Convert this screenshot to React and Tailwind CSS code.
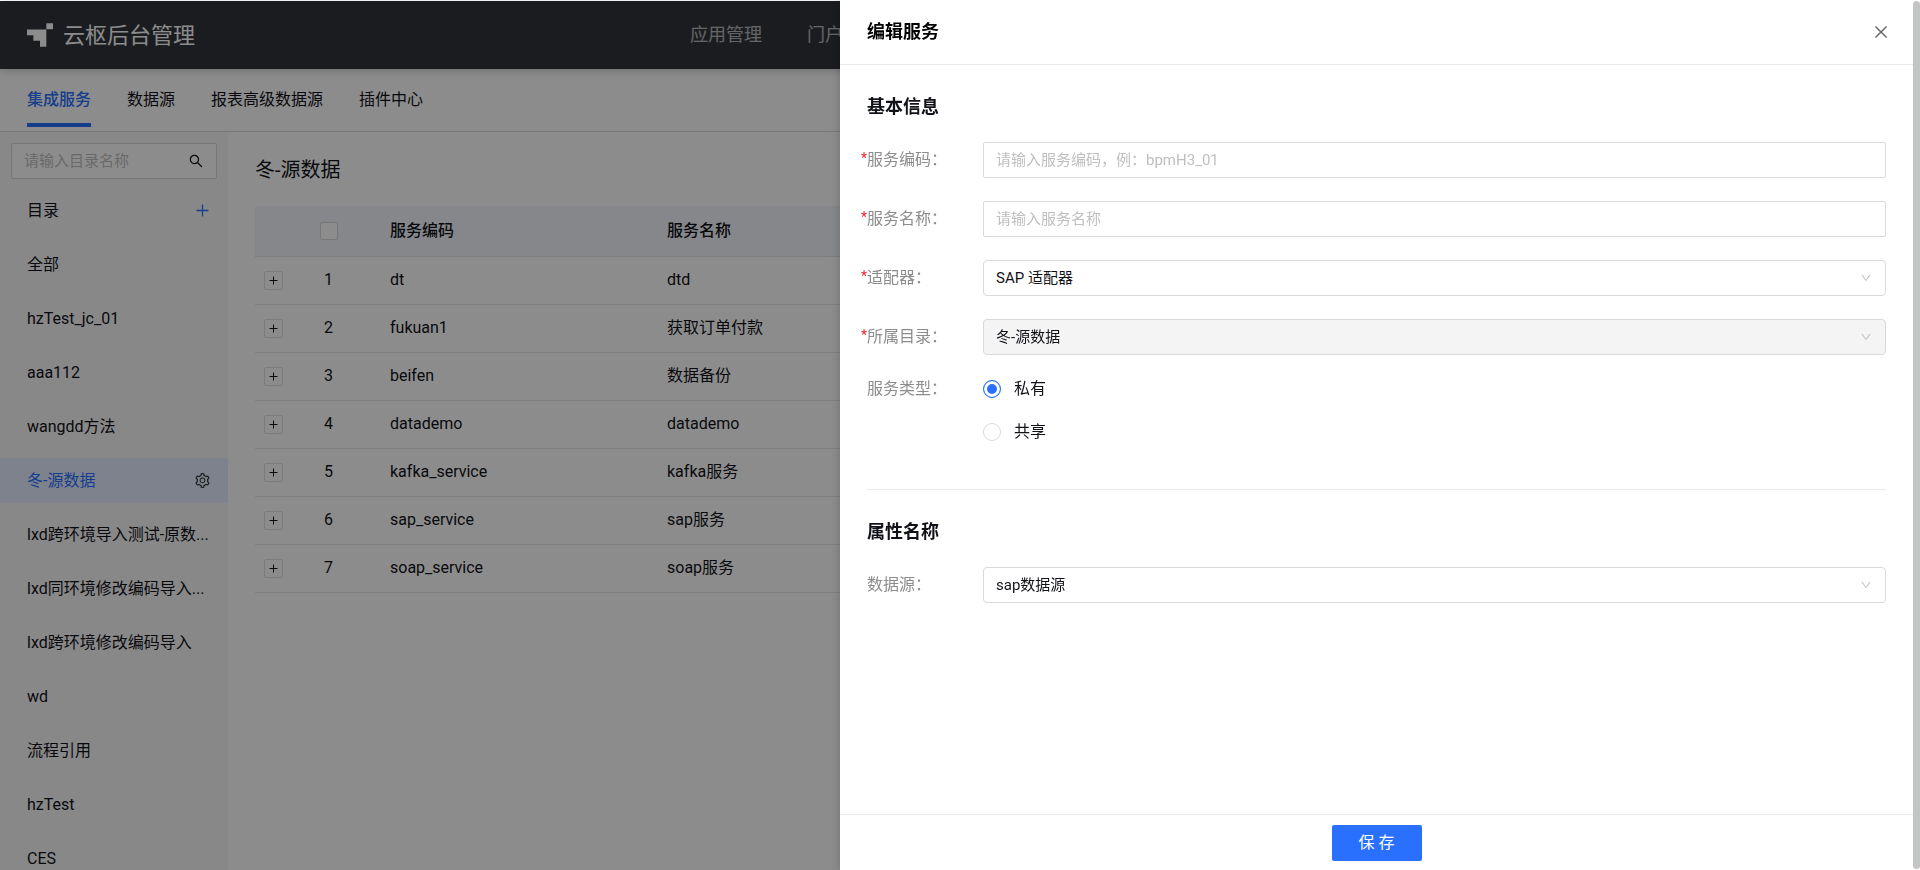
import React, { useState } from 'react';
import {
  AiOutlineClose,
  AiOutlineDown,
  AiOutlinePlus,
  AiOutlineSearch,
  AiOutlineSetting,
} from 'react-icons/ai';

const navItems = ['应用管理', '门户管理'];

const tabs = ['集成服务', '数据源', '报表高级数据源', '插件中心'];

const folders = [
  '全部',
  'hzTest_jc_01',
  'aaa112',
  'wangdd方法',
  '冬-源数据',
  'lxd跨环境导入测试-原数...',
  'lxd同环境修改编码导入...',
  'lxd跨环境修改编码导入',
  'wd',
  '流程引用',
  'hzTest',
  'CES',
];

const services = [
  { code: 'dt', name: 'dtd' },
  { code: 'fukuan1', name: '获取订单付款' },
  { code: 'beifen', name: '数据备份' },
  { code: 'datademo', name: 'datademo' },
  { code: 'kafka_service', name: 'kafka服务' },
  { code: 'sap_service', name: 'sap服务' },
  { code: 'soap_service', name: 'soap服务' },
];

const Logo = () => (
  <svg className="w-[26px] h-6" viewBox="0 0 78 71" fill="currentColor" aria-hidden="true">
    <path d="M58 0h20v18H58zM0 19h58v52H39V53H19V36H0z" />
  </svg>
);

const Header = () => (
  <header className="relative z-10 flex items-center h-17 px-[27px] bg-[#31333a] text-white shadow-[0_2px_8px_rgba(0,0,0,0.2)]">
    <div className="flex flex-1 items-center gap-2.5">
      <Logo />
      <span className="text-[22px]">云枢后台管理</span>
    </div>
    <nav className="flex gap-[45px] w-[540px] text-lg text-white/65">
      {navItems.map((item) => (
        <a key={item} href="#">{item}</a>
      ))}
    </nav>
    <div className="flex-1"></div>
  </header>
);

const TabBar = () => (
  <nav className="flex shrink-0 gap-9 h-[63px] px-[27px] border-b border-[#d9d9d9]">
    {tabs.map((tab, i) => (
      <a
        key={tab}
        href="#"
        className={
          i === 0
            ? 'h-[58px] pt-[19px] border-b-4 border-[#2970ff] text-[#2970ff] font-medium'
            : 'h-[58px] pt-[19px]'
        }
      >
        {tab}
      </a>
    ))}
  </nav>
);

const Sidebar = ({ active, onSelect }) => (
  <aside className="w-57 shrink-0 pt-[11px] bg-[#f8f8f8]">
    <div className="flex items-center h-9 mx-[11px] pl-3 pr-3 bg-white border border-[#d9d9d9] rounded-xs">
      <input
        aria-label="目录名称"
        placeholder="请输入目录名称"
        className="flex-1 min-w-0 text-[15px] outline-none placeholder:text-[#bfbfbf]"
      />
      <button aria-label="搜索">
        <AiOutlineSearch className="size-4" />
      </button>
    </div>
    <div className="flex items-center justify-between h-[63px] pl-[27px] pr-[17px]">
      <span>目录</span>
      <button aria-label="新增目录" className="text-[#2970ff]">
        <AiOutlinePlus className="size-[17px]" />
      </button>
    </div>
    <ul className="flex flex-col gap-[9px]">
      {folders.map((folder) => (
        <li
          key={folder}
          className={`flex items-center justify-between h-[45px] pl-[27px] pr-[17px] ${
            folder === active ? 'bg-[#e4edff] text-[#2970ff]' : ''
          }`}
        >
          <button className="whitespace-nowrap" onClick={() => onSelect(folder)}>{folder}</button>
          {folder === active && (
            <button aria-label="目录设置" className="text-[#333]">
              <AiOutlineSetting className="size-[17px]" />
            </button>
          )}
        </li>
      ))}
    </ul>
  </aside>
);

const ServiceTable = ({ title }) => (
  <main className="flex-1 px-[27px] pt-[22px]">
    <h1 className="h-[52px] text-xl leading-8">{title}</h1>
    <table className="w-full table-fixed text-left">
      <thead>
        <tr className="h-[50px] bg-[#f4f6fc] border-b border-[#e4e4ea]">
          <th className="w-9"></th>
          <th className="w-[75px]">
            <input
              type="checkbox"
              aria-label="全选"
              className="block size-[18px] mx-auto appearance-none bg-white border border-[#d9d9d9] rounded-xs"
            />
          </th>
          <th className="w-[277px] px-6 font-medium">服务编码</th>
          <th className="px-6 font-medium">服务名称</th>
        </tr>
      </thead>
      <tbody>
        {services.map((service, i) => (
          <tr key={service.code} className="h-12 border-b border-[#e8e8e8]">
            <td>
              <button
                aria-label="展开"
                className="flex items-center justify-center size-[19px] mx-auto bg-white border border-[#e0e0e0] rounded-xs"
              >
                <svg className="size-[9px]" viewBox="0 0 9 9" stroke="currentColor" aria-hidden="true">
                  <path d="M0.5 4.5h8M4.5 0.5v8" />
                </svg>
              </button>
            </td>
            <td className="text-center">{i + 1}</td>
            <td className="px-6">{service.code}</td>
            <td className="px-6">{service.name}</td>
          </tr>
        ))}
      </tbody>
    </table>
  </main>
);

const Field = ({ id, label, required, children }) => (
  <div className="flex items-center">
    <label htmlFor={id} className="relative w-29 shrink-0 text-[#8c8c8c]">
      {required && <span className="absolute right-full text-sm text-[#f5222d]">*</span>}
      {label}：
    </label>
    {children}
  </div>
);

const TextInput = ({ id, placeholder }) => (
  <input
    id={id}
    placeholder={placeholder}
    className="flex-1 min-w-0 h-9 px-3 text-[15px] border border-[#d9d9d9] rounded-xs outline-none placeholder:text-[#bfbfbf]"
  />
);

const Select = ({ id, options, disabled }) => (
  <div className="relative flex-1">
    <select
      id={id}
      disabled={disabled}
      className="block w-full h-9 px-3 text-[15px] appearance-none bg-white border border-[#d9d9d9] rounded outline-none disabled:bg-[#f4f4f4] disabled:opacity-100"
    >
      {options.map((option) => (
        <option key={option}>{option}</option>
      ))}
    </select>
    <AiOutlineDown className="absolute right-3.5 top-3 size-3 text-[#bfbfbf] pointer-events-none" />
  </div>
);

const Radio = ({ label, value, checked, onChange }) => (
  <label className="flex items-center gap-[13px] h-[18px]">
    <input
      type="radio"
      name="serviceType"
      value={value}
      checked={checked}
      onChange={onChange}
      className="size-[18px] appearance-none bg-white border border-[#d9d9d9] rounded-full checked:border-[#2970ff] checked:bg-[#2970ff] checked:shadow-[inset_0_0_0_3px_#fff]"
    />
    <span>{label}</span>
  </label>
);

const EditDrawer = () => {
  const [type, setType] = useState('private');

  return (
    <div
      role="dialog"
      aria-label="编辑服务"
      className="fixed inset-y-0 right-0 z-30 flex w-[1080px] max-w-full bg-white shadow-[-2px_0_8px_rgba(0,0,0,0.15)]"
    >
      <div className="flex flex-col flex-1 min-w-0">
        <div className="flex items-center justify-between h-[65px] shrink-0 px-[27px] border-b border-[#e8e8e8]">
          <h2 className="text-lg font-bold text-black">编辑服务</h2>
          <button aria-label="关闭" className="-mr-1 text-[#666]">
            <AiOutlineClose className="size-[18px]" />
          </button>
        </div>

        <form className="flex-1 min-h-0 px-[27px] pt-7 overflow-hidden">
          <h3 className="text-lg leading-7 font-bold">基本信息</h3>
          <div className="flex flex-col gap-[23px] pt-[21px]">
            <Field id="code" label="服务编码" required>
              <TextInput id="code" placeholder="请输入服务编码，例：bpmH3_01" />
            </Field>
            <Field id="name" label="服务名称" required>
              <TextInput id="name" placeholder="请输入服务名称" />
            </Field>
            <Field id="adapter" label="适配器" required>
              <Select id="adapter" options={['SAP 适配器']} />
            </Field>
            <Field id="folder" label="所属目录" required>
              <Select id="folder" options={['冬-源数据']} disabled />
            </Field>
          </div>

          <fieldset className="flex pt-[25px] pb-12 border-b border-[#e8e8e8]">
            <legend className="float-left w-29 h-[18px] leading-[18px] text-[#8c8c8c]">服务类型：</legend>
            <div className="flex flex-col gap-[25px]">
              <Radio label="私有" value="private" checked={type === 'private'} onChange={() => setType('private')} />
              <Radio label="共享" value="shared" checked={type === 'shared'} onChange={() => setType('shared')} />
            </div>
          </fieldset>

          <h3 className="pt-7 pb-[21px] text-lg leading-7 font-bold">属性名称</h3>
          <Field id="source" label="数据源">
            <Select id="source" options={['sap数据源']} />
          </Field>
        </form>

        <div className="flex items-center justify-center h-14 shrink-0 pr-[-1px] pb-[-1px] border-t border-[#e8e8e8]">
          <button className="w-[90px] h-9 bg-[#2970ff] text-white rounded-xs">保 存</button>
        </div>
      </div>
      <div className="w-[7px] mt-px mb-px bg-[#c3c4c5] rounded-full"></div>
    </div>
  );
};

const App = () => {
  const [folder, setFolder] = useState('冬-源数据');

  return (
    <div className="h-screen pt-px overflow-hidden bg-white text-[#111218] text-base font-[Roboto,'Noto_Sans_CJK_SC',sans-serif]">
      <div className="flex flex-col h-full">
        <Header />
        <TabBar />
        <div className="flex flex-1 min-h-0">
          <Sidebar active={folder} onSelect={setFolder} />
          <ServiceTable title={folder} />
        </div>
      </div>
      <div className="fixed inset-x-0 top-px bottom-0 z-20 bg-black/45"></div>
      <EditDrawer />
    </div>
  );
};

export default App;
